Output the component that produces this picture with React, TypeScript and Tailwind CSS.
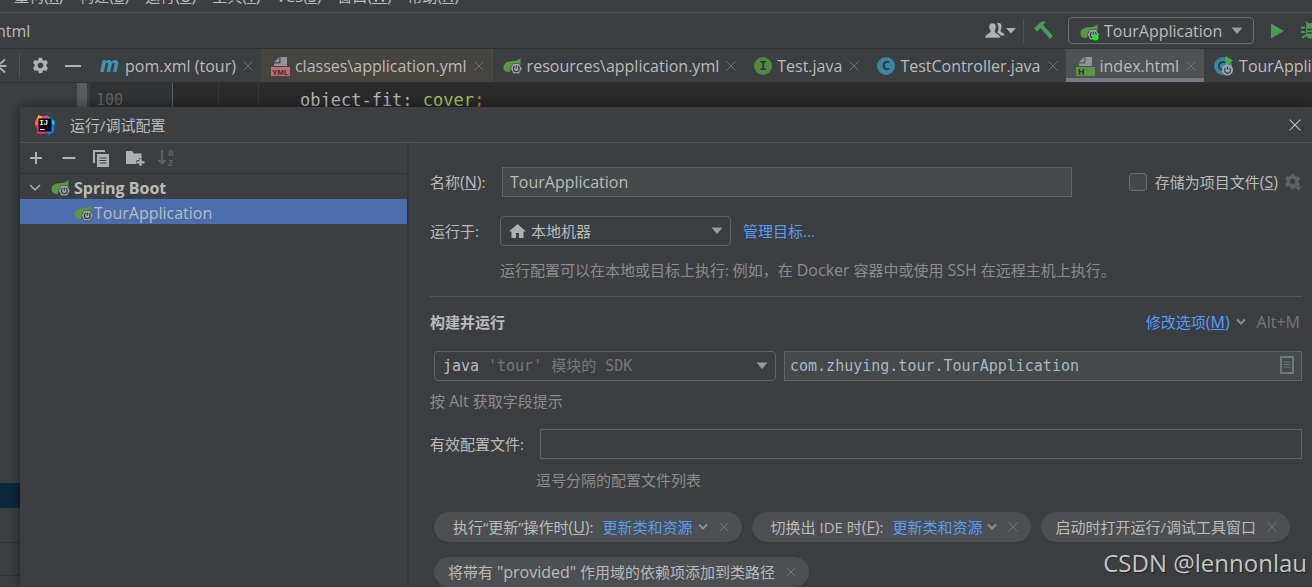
import { useState } from 'react';
import type { ReactNode } from 'react';

const menus = [
  { label: '重构', key: 'R' },
  { label: '构建', key: 'B' },
  { label: '运行', key: 'U' },
  { label: '工具', key: 'T' },
  { label: 'VCS', key: 'S' },
  { label: '窗口', key: 'W' },
  { label: '帮助', key: 'H' },
];

function SpringIcon({ running = false }: { running?: boolean }) {
  return (
    <svg width="19" height="18" viewBox="0 0 19 18" className="shrink-0" aria-hidden="true">
      <path d="M17.500.5V8L13 6.500 8 9.500 7 14.800H4.500C2 14.800.5 13 .5 10.500.5 7 3 5 6 4.500 10 4 15.500 4 17.500.5Z" fill="#589843" />
      <path d="M10.300 6.500h5.800l2.900 5-2.900 5.200h-5.800L7.500 11.600Z" fill="#9aa7b0" stroke="#3c3f41" strokeWidth=".6" />
      <circle cx="13.300" cy="11.800" r="2.900" fill="none" stroke="#3c3f41" strokeWidth="1.300" />
      <path d="M13.300 8v3.800" stroke="#9aa7b0" strokeWidth="3" />
      <path d="M13.300 8.600v3.200" stroke="#3c3f41" strokeWidth="1.200" />
      {running && <circle cx="15.500" cy="14.500" r="3" fill="#0f0" />}
    </svg>
  );
}

function MavenIcon() {
  return (
    <svg width="20" height="20" viewBox="0 0 20 20" className="shrink-0" aria-hidden="true">
      <text x="0" y="16" fontFamily="Noto Sans" fontSize="21" fontWeight="800" fontStyle="italic" fill="#4291b3">m</text>
    </svg>
  );
}

function FileIcon({ kind }: { kind: 'YML' | 'H' }) {
  const isYml = kind === 'YML';
  return (
    <svg width="19" height="20" viewBox="0 0 19 20" className="shrink-0" aria-hidden="true">
      <path d="M9.500 1H16v9H3V7.500h6.500Z" fill="#8d979f" />
      <path d="M8.300 1v5.300H3Z" fill="#8d979f" />
      <rect y="11" width="19" height="9" fill={isYml ? '#c46a78' : '#5a9444'} />
      <text x={isYml ? 1 : 2} y="19" fontFamily="Liberation Sans" fontSize={isYml ? 8 : 9} fontWeight="700" fill="#2f3436">
        {kind}
      </text>
    </svg>
  );
}

function ClassIcon({ letter }: { letter: 'I' | 'C' }) {
  return (
    <svg width="18" height="18" viewBox="0 0 18 18" className="shrink-0" aria-hidden="true">
      <circle cx="9" cy="9" r="9" fill={letter === 'I' ? '#4f8a3f' : '#3d84a0'} />
      <text x="9" y="13" textAnchor="middle" fontFamily={letter === 'I' ? 'Liberation Mono' : 'Noto Sans'} fontSize="12" fontWeight="700" fill="#26363c">
        {letter}
      </text>
    </svg>
  );
}

function RunnableClassIcon() {
  return (
    <svg width="20" height="20" viewBox="0 0 20 20" className="shrink-0" aria-hidden="true">
      <circle cx="9" cy="10" r="9" fill="#3d84a0" />
      <path d="M12 7.500a4 4 0 1 0 0 5" fill="none" stroke="#26363c" strokeWidth="1.600" />
      <path d="M11.500 0 19 4.500 11.500 9Z" fill="#4caf3f" />
      <circle cx="13.500" cy="14" r="5.500" fill="#9aa7b0" />
      <path d="M11.500 12a3 3 0 1 0 4 0M13.500 10.500v3.500" fill="none" stroke="#34474f" strokeWidth="1.300" />
    </svg>
  );
}

function GearIcon({ menu = false }: { menu?: boolean }) {
  return (
    <svg width="18" height="18" viewBox="0 0 18 18" className="shrink-0" fill="currentColor" aria-hidden="true">
      <path
        fillRule="evenodd"
        d="M6.800.8h3.400l.5 2.200 1.500.8 2.100-.7 1.700 2.900-1.600 1.500v2l1.600 1.500-1.700 2.900-2.100-.7-1.500.8-.5 2.200H6.800L6.300 14l-1.500-.8-2.100.7L1 11l1.600-1.500v-2L1 6l1.700-2.900 2.100.7L6.300 3ZM8.500 5.700a2.800 2.800 0 1 0 0 5.600 2.800 2.800 0 0 0 0-5.600Z"
      />
      {menu && <path d="M10.500 13.500h7.500l-3.700 4Z" />}
    </svg>
  );
}

function CloseIcon({ size = 10 }: { size?: number }) {
  return (
    <svg width={size} height={size} viewBox="0 0 10 10" className="shrink-0" fill="none" stroke="currentColor" aria-hidden="true">
      <path d="M.5.5l9 9M9.500.5l-9 9" />
    </svg>
  );
}

function ArrowDown() {
  return (
    <svg width="12" height="8" viewBox="0 0 12 8" className="shrink-0" fill="currentColor" aria-hidden="true">
      <path d="M.5.5h11L6 7Z" />
    </svg>
  );
}

function Chevron() {
  return (
    <svg width="10" height="8" viewBox="0 0 10 8" className="shrink-0" fill="none" stroke="currentColor" strokeWidth="2" aria-hidden="true">
      <path d="M1 1.500l4 4 4-4" />
    </svg>
  );
}

function IdeaLogo() {
  return (
    <svg width="20" height="20" viewBox="0 0 20 20" className="shrink-0" aria-hidden="true">
      <path d="M3.500 0 8 2l3 6-7 3-4-3Z" fill="#fdb60d" />
      <path d="M.5 5 6 3v9L0 11Z" fill="#ff6d3a" />
      <path d="M0 10h8l3 9-9.500-.5 1-3.500Z" fill="#f9296f" />
      <path d="M7 1l6-.5L15 6H7Z" fill="#e0459b" />
      <path d="M13 1l6.500 5-.5 11-5.500 3L9 15 12 5Z" fill="#087cfa" />
      <path d="M13 1l6.500 5v4L15 8Z" fill="#07c3f2" />
      <rect x="3.500" y="3.500" width="13" height="13" fill="#0a0508" />
      <text x="4.500" y="9.500" fontFamily="Liberation Mono" fontSize="7" fontWeight="700" fill="#fff">IJ</text>
      <path d="M5 14.500h4.500" stroke="#fff" />
    </svg>
  );
}

interface TabProps {
  icon: ReactNode;
  name: string;
  variant?: 'plain' | 'library' | 'active';
}

function Tab({ icon, name, variant = 'plain' }: TabProps) {
  const look = {
    plain: '',
    library: 'bg-[#45443e] border-r border-[#4b4b48]',
    active: 'bg-[#4e5254] border-b-4 border-[#747a80] pt-1',
  }[variant];
  return (
    <div className={`flex items-center shrink-0 pl-2.5 pr-[7px] ${look}`}>
      <button className="flex items-center gap-[5px] whitespace-nowrap">
        {icon}
        {name}
      </button>
      <button className="ml-1.5 p-px text-[#6e7173]" aria-label={`关闭 ${name}`}>
        <CloseIcon />
      </button>
    </div>
  );
}

function Mnemonic({ char }: { char: string }) {
  return (
    <span className="text-base leading-5">
      (<u>{char}</u>)
    </span>
  );
}

function Chip({ children, label }: { children: ReactNode; label: string }) {
  return (
    <div className="flex items-center h-[30px] rounded-full bg-[#4c5052] pl-3.5 pr-[13px] shadow-sm whitespace-nowrap">
      {children}
      <button className="ml-[11px] text-[#6e7173]" aria-label={`移除 ${label}`}>
        <CloseIcon />
      </button>
    </div>
  );
}

function LinkedChip({ label, mnemonic }: { label: string; mnemonic: string }) {
  return (
    <Chip label={label}>
      <span className="pl-[5px]">
        {label}
        <Mnemonic char={mnemonic} />:
      </span>
      <button className="flex items-center gap-[5px] ml-[9px] text-[#589df6]">
        更新类和资源
        <span className="text-[#8a8d8f]">
          <Chevron />
        </span>
      </button>
    </Chip>
  );
}

function MainToolbar() {
  return (
    <div className="flex items-center h-9 border-b border-[#323232] text-base">
      <span className="-ml-1">html</span>
      <div className="flex items-center ml-auto">
        <button className="flex items-center gap-px text-[#afb1b3]" aria-label="用户">
          <svg width="20" height="17" viewBox="0 0 20 17" fill="currentColor" aria-hidden="true">
            <path d="M12 1.500c3-1.500 5 .5 4.500 4-.2 1.500-1 2.500-1 3.500 0 1.500 4 1.500 4 4.500h-4c-1-2-3-2.500-3-3.500 1.500-2.500 1.500-6-.5-8.500Z" />
            <path d="M7.500 1C10 1 11.500 3 11 6c-.2 1.300-1 2.300-1 3.300 0 2.200 5 2.200 5.500 6.700H0c.3-4.500 5.300-4.500 5.300-6.700C5.300 8.300 4.300 7.300 4 6 3.600 3 5 1 7.500 1Z" stroke="#3c3f41" strokeWidth=".6" />
          </svg>
          <svg width="10" height="6" viewBox="0 0 10 6" fill="currentColor" aria-hidden="true">
            <path d="M0 0h10L5 5.500Z" />
          </svg>
        </button>
        <div className="w-px h-6 ml-[7px] bg-[#515355]" />
        <button className="ml-2.5" aria-label="构建项目">
          <svg width="20" height="19" viewBox="0 0 20 19" aria-hidden="true">
            <path d="M0 7.500 7 .8l5-.3-3 3.500 10 11-3 3L6.500 7 3 10.500Z" fill="#499c54" />
          </svg>
        </button>
        <div className="relative ml-3.5">
          <select
            aria-label="运行配置"
            className="appearance-none h-[27px] w-[186px] rounded-[4px] border border-[#6a6c6d] bg-[#3c3f41] pl-[35px] pr-7 leading-5"
          >
            <option>TourApplication</option>
          </select>
          <span className="absolute left-3 top-1.5 pointer-events-none">
            <SpringIcon running />
          </span>
          <span className="absolute right-[11px] top-[10px] text-[#9a9da0] pointer-events-none">
            <ArrowDown />
          </span>
        </div>
        <button className="ml-[17px]" aria-label="运行">
          <svg width="13" height="16" viewBox="0 0 13 16" aria-hidden="true">
            <path d="M0 .5 13 8 0 15.500Z" fill="#499c54" />
          </svg>
        </button>
        <button className="ml-[17px] w-[11px] overflow-hidden" aria-label="调试">
          <svg width="19" height="19" viewBox="0 0 19 19" className="max-w-none" aria-hidden="true">
            <path d="M5 1l2 2.500M14 1l-2 2.500M0 6.500h4M0 11h4M1 17l4-3M19 6.500h-4M19 11h-4" stroke="#499c54" strokeWidth="2" />
            <path d="M5 5.500C5 3 7 2 9.500 2S14 3 14 5.500V13c0 3-2 4.500-4.500 4.500S5 16 5 13Z" fill="#499c54" />
            <path d="M6 8.500h7M6 12h7" stroke="#3c3f41" strokeWidth="1.500" />
          </svg>
        </button>
      </div>
    </div>
  );
}

function TabStrip() {
  return (
    <div className="flex h-[34px] text-base border-b border-[#323232]">
      <div className="flex items-center w-[90px] shrink-0 text-[#afb1b3]">
        <button aria-label="全部折叠">
          <svg width="7" height="18" viewBox="0 0 7 18" fill="none" stroke="currentColor" strokeWidth="1.800" aria-hidden="true">
            <path d="M0 9h6.500M5 2.500 0 7M5 15.500 0 11" />
          </svg>
        </button>
        <div className="w-px h-6 mx-3 bg-[#515355]" />
        <button aria-label="设置">
          <GearIcon />
        </button>
        <button className="ml-[15px] w-4 h-[2px] bg-[#afb1b3]" aria-label="隐藏" />
      </div>
      <Tab icon={<MavenIcon />} name="pom.xml (tour)" />
      <Tab icon={<FileIcon kind="YML" />} name="classes\application.yml" variant="library" />
      <Tab icon={<SpringIcon />} name="resources\application.yml" />
      <Tab icon={<ClassIcon letter="I" />} name="Test.java" />
      <Tab icon={<ClassIcon letter="C" />} name="TestController.java" />
      <Tab icon={<FileIcon kind="H" />} name="index.html" variant="active" />
      <Tab icon={<RunnableClassIcon />} name="TourApplication.java" />
    </div>
  );
}

function EditorArea() {
  return (
    <div className="flex flex-1">
      <div className="flex w-[90px] shrink-0">
        <div className="flex-1 pt-[400px]">
          <div className="h-[25px] bg-[#0d293e]" />
          <div className="mt-[34px] h-[34px] border-y border-[#323232]" />
        </div>
        <div className="w-2.5 mr-[3px] bg-[#595b5d]" />
      </div>
      <div className="w-[83px] shrink-0 bg-[#313335] border-r border-[#606366] pl-1.5 pt-[7px] font-['DejaVu_Sans_Mono',monospace] text-[15px] leading-5 text-[#606366]">
        100
      </div>
      <div className="flex flex-1 bg-[#2b2b2b]">
        <div className="w-[46px] border-r border-[#393939]" />
        <div className="w-10 border-r border-[#393939]" />
        <code className="pl-[41px] pt-[7px] font-['DejaVu_Sans_Mono',monospace] text-[17px] leading-5 text-[#bababa]">
          object-fit: <span className="text-[#a5c261]">cover</span>
          <span className="text-[#cc7832]">;</span>
        </code>
      </div>
    </div>
  );
}

function ConfigTree() {
  return (
    <aside className="w-[389px] shrink-0 border-r-2 border-[#323436]">
      <div className="flex items-center h-[31px] pl-2 border-b border-[#323232] text-[#afb1b3]">
        <button aria-label="添加" className="mr-[17px]">
          <svg width="16" height="16" viewBox="0 0 16 16" stroke="currentColor" strokeWidth="2" aria-hidden="true">
            <path d="M8 2v12M2 8h12" />
          </svg>
        </button>
        <button aria-label="移除" className="mr-4">
          <svg width="16" height="16" viewBox="0 0 16 16" stroke="currentColor" strokeWidth="2" aria-hidden="true">
            <path d="M1.500 8h13" />
          </svg>
        </button>
        <button aria-label="复制" className="mr-4">
          <svg width="17" height="17" viewBox="0 0 17 17" aria-hidden="true">
            <path d="M1 13V1h11" fill="none" stroke="currentColor" strokeWidth="2" />
            <path d="M4 4h12v13H4Z" fill="currentColor" />
            <path d="M6.500 8h7M6.500 10.500h7M6.500 13h7" stroke="#3c3f41" strokeWidth="1.200" />
          </svg>
        </button>
        <button aria-label="新建文件夹" className="mr-3">
          <svg width="19" height="18" viewBox="0 0 19 18" fill="currentColor" aria-hidden="true">
            <path d="M0 2h6l2 2.500h7.500V9H13v2h-2.500v4H0Z" />
            <path d="M14.500 9.500V17M11 13.300h7.500" stroke="currentColor" strokeWidth="2.200" />
          </svg>
        </button>
        <button aria-label="排序" disabled className="text-[#5f6265]">
          <svg width="18" height="18" viewBox="0 0 18 18" fill="currentColor" aria-hidden="true">
            <path d="M4 1h2v10h3.500L5 16 .5 11H4Z" />
            <text x="11" y="6.500" fontFamily="Liberation Sans" fontSize="10" fontWeight="700">a</text>
            <text x="11" y="16.500" fontFamily="Liberation Sans" fontSize="10" fontWeight="700">z</text>
          </svg>
        </button>
      </div>
      <ul role="tree" className="text-base leading-6">
        <li role="treeitem" aria-expanded="true" aria-selected="false">
          <div className="flex items-center h-[25px] pt-0.5 pl-[9px] font-bold">
            <svg width="12" height="8" viewBox="0 0 12 8" fill="none" stroke="#afb1b3" strokeWidth="1.500" aria-hidden="true">
              <path d="M1 1l5 5 5-5" />
            </svg>
            <span className="ml-2.5 mr-1">
              <SpringIcon />
            </span>
            Spring Boot
          </div>
          <ul role="group">
            <li role="treeitem" aria-selected="true" className="flex items-center h-[25px] pt-0.5 pl-[54px] bg-[#4b6eaf]">
              <SpringIcon />
              <span className="ml-px">TourApplication</span>
            </li>
          </ul>
        </li>
      </ul>
    </aside>
  );
}

function ConfigForm() {
  const [name, setName] = useState('TourApplication');
  const [mainClass, setMainClass] = useState('com.zhuying.tour.TourApplication');
  const [profiles, setProfiles] = useState('');
  const [stored, setStored] = useState(false);

  return (
    <form className="flex-1 min-w-0 pl-[21px] pr-[10px] pt-6" onSubmit={(e) => e.preventDefault()}>
      <div className="flex items-center">
        <label htmlFor="name" className="w-[72px] shrink-0">
          名称
          <Mnemonic char="N" />:
        </label>
        <input
          id="name"
          value={name}
          onChange={(e) => setName(e.target.value)}
          className="flex-1 min-w-0 h-[30px] px-[7px] text-base leading-5 bg-[#45494a] border border-[#646464] outline-none"
        />
        <label className="flex items-center gap-2 ml-[57px] shrink-0">
          <input
            type="checkbox"
            checked={stored}
            onChange={(e) => setStored(e.target.checked)}
            className="appearance-none size-[18px] rounded-[3px] border border-[#6b6b6b] bg-[#43494a] checked:bg-[#4b6eaf]"
          />
          <span>
            存储为项目文件
            <Mnemonic char="S" />
          </span>
        </label>
        <button className="ml-1.5 text-[#5f6265]" aria-label="存储设置">
          <GearIcon menu />
        </button>
      </div>

      <div className="flex items-center mt-[19px]">
        <label htmlFor="target" className="w-[70px] shrink-0">
          运行于:
        </label>
        <div className="relative">
          <select
            id="target"
            className="appearance-none w-[231px] h-[30px] pl-[30px] pr-8 rounded-[4px] border border-[#646464] bg-[#3c3f41] leading-5"
          >
            <option>本地机器</option>
          </select>
          <svg width="17" height="15" viewBox="0 0 17 15" className="absolute left-[9px] top-2 pointer-events-none" fill="#afb1b3" aria-hidden="true">
            <path d="M8.500 0 17 7.500h-2.500V14H10V9H7v5H2.500V7.500H0Z" />
          </svg>
          <span className="absolute right-2 top-[11px] text-[#9a9da0] pointer-events-none">
            <ArrowDown />
          </span>
        </div>
        <a href="#targets" className="ml-3 text-[#589df6]">
          管理目标...
        </a>
      </div>
      <p className="mt-3.5 pl-[70px] text-[#8c8c8c]">
        运行配置可以在本地或目标上执行: 例如，在 <span className="text-base leading-5">Docker</span> 容器中或使用{' '}
        <span className="text-base leading-5">SSH</span> 在远程主机上执行。
      </p>

      <div className="flex items-center justify-between mt-4 pt-[15px] border-t border-[#515355]">
        <h2 className="font-bold">构建并运行</h2>
        <div className="flex items-center">
          <button className="flex items-center gap-1.5 text-[#589df6]">
            <span>
              修改选项
              <Mnemonic char="M" />
            </span>
            <span className="text-[#8a8d8f]">
              <Chevron />
            </span>
          </button>
          <span className="ml-[11px] mr-0.5 text-base leading-5 text-[#777]">Alt+M</span>
        </div>
      </div>

      <div className="flex gap-2 mt-[19px] pl-1 font-['DejaVu_Sans_Mono','Noto_Sans_CJK_SC',monospace]">
        <div className="relative w-[342px] shrink-0">
          <select
            aria-label="SDK"
            className="appearance-none w-full h-[30px] pl-2 pr-8 rounded-[4px] border border-[#646464] bg-[#3c3f41] leading-5"
          >
            <option>java</option>
          </select>
          <span className="absolute left-[54px] top-[5px] text-[#777] pointer-events-none">'tour' 模块的 SDK</span>
          <span className="absolute right-2 top-[11px] text-[#9a9da0] pointer-events-none">
            <ArrowDown />
          </span>
        </div>
        <div className="relative flex-1">
          <input
            aria-label="主类"
            value={mainClass}
            onChange={(e) => setMainClass(e.target.value)}
            className="w-full h-[30px] pl-[5px] pr-8 bg-[#45494a] border border-[#646464] text-[#a9b7c6] leading-5 outline-none"
          />
          <button className="absolute right-2 top-[5px] text-[#6e7880]" aria-label="浏览">
            <svg width="14" height="18" viewBox="0 0 14 18" fill="none" stroke="currentColor" aria-hidden="true">
              <path d="M1 1h12v16H1Z" strokeWidth="2" />
              <path d="M3.500 6h7M3.500 8.500h7M3.500 11h7" />
            </svg>
          </button>
        </div>
      </div>
      <p className="mt-[10px] text-[#8c8c8c]">
        按 <span className="text-base leading-5">Alt</span> 获取字段提示
      </p>

      <div className="flex items-center mt-[18px]">
        <label htmlFor="profiles" className="w-[110px] shrink-0">
          有效配置文件:
        </label>
        <input
          id="profiles"
          value={profiles}
          onChange={(e) => setProfiles(e.target.value)}
          className="flex-1 h-[30px] px-[7px] border border-[#646464] outline-none"
        />
      </div>
      <p className="mt-[11px] pl-[106px] text-[#8c8c8c]">逗号分隔的配置文件列表</p>

      <div className="flex flex-wrap gap-x-2.5 gap-y-[15px] mt-[22px] pl-1">
        <LinkedChip label="执行“更新”操作时" mnemonic="U" />
        <LinkedChip label="切换出 IDE 时" mnemonic="F" />
        <Chip label="启动时打开运行/调试工具窗口">启动时打开运行/调试工具窗口</Chip>
        <Chip label="provided">
          <span>
            将带有 <span className="text-base leading-5">"provided"</span> 作用域的依赖项添加到类路径
          </span>
        </Chip>
      </div>
    </form>
  );
}

export default function App() {
  return (
    <div className="relative flex flex-col h-screen overflow-hidden bg-[#3c3f41] text-[#bbbbbb] text-[15px] leading-5 font-['Open_Sans','Noto_Sans_CJK_SC',sans-serif]">
      <nav className="flex items-end h-[13px] shrink-0 overflow-hidden gap-4 pl-3.5 pb-1.5 border-b border-[#515355]">
        {menus.map((menu) => (
          <button key={menu.key} className="shrink-0">
            {menu.label}
            <Mnemonic char={menu.key} />
          </button>
        ))}
      </nav>
      <MainToolbar />
      <TabStrip />
      <EditorArea />

      <div
        role="dialog"
        aria-labelledby="dialog-title"
        className="absolute left-5 right-0 top-[107px] bottom-0 flex flex-col bg-[#3c3f41] shadow-[0_0_12px_rgba(0,0,0,0.5)]"
      >
        <header className="flex items-center h-9 shrink-0 pl-[15px] pr-[11px] border-b border-[#515355]">
          <IdeaLogo />
          <h1 id="dialog-title" className="ml-[15px]">
            运行/调试配置
          </h1>
          <button className="ml-auto" aria-label="关闭">
            <CloseIcon size={12} />
          </button>
        </header>
        <div className="flex flex-1 min-h-0">
          <ConfigTree />
          <ConfigForm />
        </div>
      </div>

      <div className="absolute right-[5px] bottom-2 text-[24px] leading-8 text-[#c4c5c6] [text-shadow:1px_1px_1px_#222] pointer-events-none">
        CSDN @lennonlau
      </div>
    </div>
  );
}
